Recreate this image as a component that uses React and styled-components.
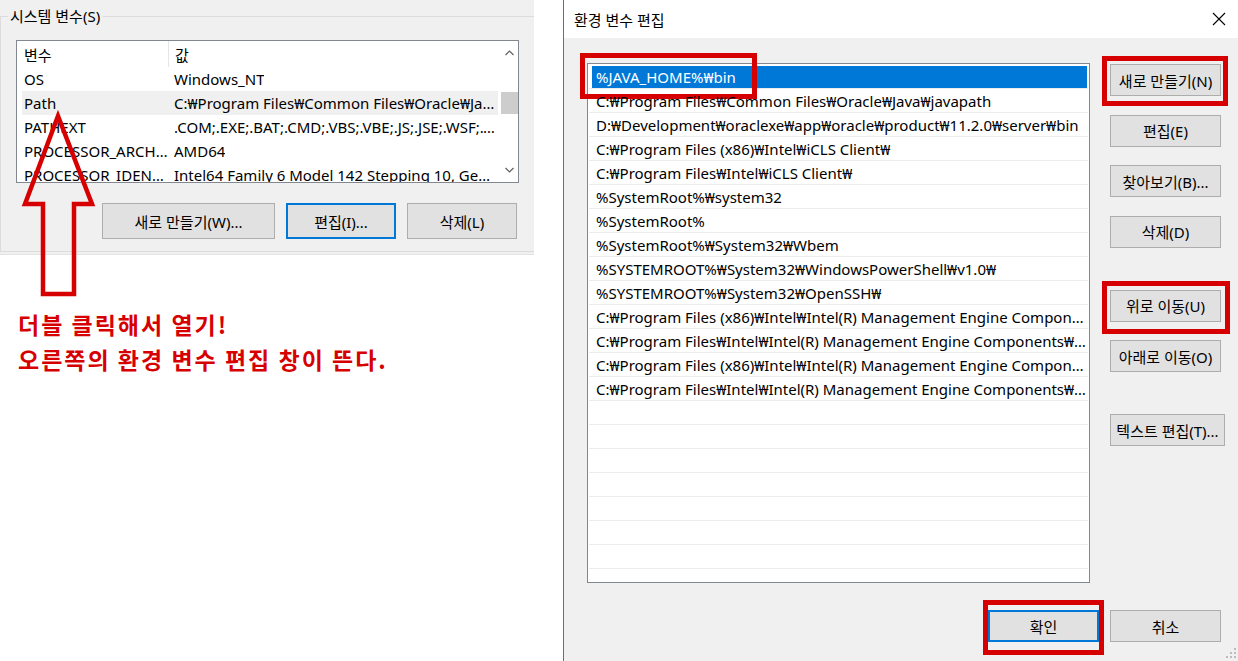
import React from 'react';
import styled, { createGlobalStyle, css } from 'styled-components';

const GlobalStyle = createGlobalStyle`
  html, body {
    margin: 0;
    padding: 0;
    background: #ffffff;
  }
  body {
    font-family: "Noto Sans", "Noto Sans CJK KR", sans-serif;
    font-size: 15px;
    color: #000;
  }
`;

const RED = '#d70000';

const Page = styled.div`
  display: flex;
  width: 1238px;
  height: 661px;
  overflow: hidden;
  background: #fff;
`;

/* ---------- left: 시스템 변수 ---------- */

const LeftSide = styled.div`
  position: relative;
  width: 563px;
  flex-shrink: 0;
  display: flex;
  flex-direction: column;
`;

const SystemPanel = styled.div`
  width: 534px;
  height: 255px;
  background: #f0f0f0;
  box-sizing: border-box;
  padding-top: 6px;
  border-bottom: 1px solid #e3e3e3;
`;

const GroupBox = styled.fieldset`
  margin: 0;
  padding: 0 0 12px 15px;
  border: 1px solid #dcdcdc;
  border-right: none;
  min-width: 0;
`;

const Legend = styled.legend`
  margin-left: -8px;
  padding: 0 3px 0 2px;
  line-height: 20px;
  font-size: 15px;
  color: #000;
`;

const ListView = styled.div`
  margin-top: 14px;
  width: 503px;
  height: 143px;
  box-sizing: border-box;
  border: 1px solid #828790;
  background: #fff;
  display: flex;
  overflow: hidden;
`;

const ListRows = styled.div`
  flex: 1;
  min-width: 0;
  padding: 0 3px 0 5px;
`;

const VarRow = styled.div`
  display: grid;
  grid-template-columns: 146px 1fr;
  height: ${p => (p.$header ? 26 : 24)}px;
  align-items: center;
  background: ${p => (p.$selected ? '#f0f0f0' : 'transparent')};
`;

const Cell = styled.div`
  padding-left: ${p => (p.$value ? 6 : 2)}px;
  white-space: nowrap;
  overflow: hidden;
  height: 100%;
  display: flex;
  align-items: center;
  ${p => p.$divider && css`
    border-left: 1px solid #e5e5e5;
  `}
`;

const CellText = styled.span`
  overflow: hidden;
  text-overflow: ellipsis;
  white-space: nowrap;
`;

const ScrollBar = styled.div`
  width: 17px;
  flex-shrink: 0;
  display: flex;
  flex-direction: column;
  align-items: center;
  background: #fff;
`;

const ScrollArrow = styled.div`
  height: 24px;
  display: flex;
  align-items: center;
  justify-content: center;
`;

const ScrollTrack = styled.div`
  flex: 1;
  width: 100%;
  padding-top: 27px;
  box-sizing: border-box;
`;

const ScrollThumb = styled.div`
  height: 22px;
  background: #cdcdcd;
`;

const ButtonRow = styled.div`
  display: flex;
  justify-content: flex-end;
  gap: 11px;
  margin-top: 20px;
  padding-right: 17px;
`;

const markInsets = {
  side: { top: -9, left: -9, right: -8, bottom: -11 },
  move: { top: -10, left: -9, right: -10, bottom: -13 },
  footer: { top: -12, left: -7, right: -7, bottom: -15 },
};

const WinButton = styled.button`
  position: relative;
  box-sizing: border-box;
  width: ${p => p.$w || 111}px;
  height: ${p => p.$h || 32}px;
  padding: 0;
  background: #e1e1e1;
  border: 1px solid #adadad;
  font-family: inherit;
  font-size: 15px;
  color: #000;
  white-space: nowrap;
  ${p => p.$default && css`
    border: 2px solid #0078d7;
  `}
  ${p => p.$mark && css`
    &::after {
      content: '';
      position: absolute;
      top: ${markInsets[p.$mark].top}px;
      left: ${markInsets[p.$mark].left}px;
      right: ${markInsets[p.$mark].right}px;
      bottom: ${markInsets[p.$mark].bottom}px;
      border: 5px solid ${RED};
      pointer-events: none;
    }
  `}
`;

const ArrowMark = styled.svg`
  position: absolute;
  left: 0;
  top: 0;
  pointer-events: none;
`;

const Note = styled.div`
  margin-top: 52px;
  padding-left: 18px;
  color: ${RED};
  font-family: "Noto Sans CJK KR", sans-serif;
  font-weight: 700;
  font-size: 23px;
  letter-spacing: 2px;
  line-height: 35px;
`;

/* ---------- right: 환경 변수 편집 ---------- */

const Dialog = styled.div`
  flex: 1;
  min-width: 0;
  display: flex;
  flex-direction: column;
  background: #f0f0f0;
  border-left: 1px solid #6f6f6f;
  position: relative;
`;

const TitleBar = styled.div`
  height: 38px;
  flex-shrink: 0;
  background: #fff;
  display: flex;
  align-items: center;
  justify-content: space-between;
  padding: 0 12px 0 10px;
`;

const Title = styled.span`
  font-size: 15px;
`;

const CloseBtn = styled.span`
  display: flex;
  width: 14px;
  height: 14px;
`;

const DialogBody = styled.div`
  display: flex;
  gap: 20px;
  padding: 25px 0 0 23px;
`;

const PathList = styled.div`
  width: 503px;
  height: 520px;
  flex-shrink: 0;
  box-sizing: border-box;
  border: 1px solid #828790;
  background: #fff;
  padding: 1px 1px 0 1px;
`;

const PathRow = styled.div`
  position: relative;
  height: 24px;
  box-sizing: border-box;
  border-bottom: 1px solid #ececec;
  display: flex;
  padding: 1px 1px 0 3px;
`;

const PathText = styled.div`
  flex: 1;
  min-width: 0;
  padding-left: 4px;
  line-height: 22px;
  white-space: nowrap;
  overflow: hidden;
  text-overflow: ellipsis;
  ${p => p.$editing && css`
    background: #0078d7;
    color: #fff;
  `}
`;

const RowMark = styled.span`
  position: absolute;
  top: -12px;
  left: -9px;
  width: 177px;
  height: 46px;
  box-sizing: border-box;
  border: 5px solid ${RED};
  pointer-events: none;
`;

const ButtonColumn = styled.div`
  display: flex;
  flex-direction: column;
  gap: 42px;
  padding-top: 1px;
`;

const ButtonGroup = styled.div`
  display: flex;
  flex-direction: column;
  gap: 18.5px;
`;

const Footer = styled.div`
  display: flex;
  justify-content: flex-end;
  gap: 11px;
  padding: 27px 17px 0 0;
`;

const Grip = styled.svg`
  position: absolute;
  right: 1px;
  bottom: 1px;
`;

const systemVars = [
  ['OS', 'Windows_NT'],
  ['Path', 'C:₩Program Files₩Common Files₩Oracle₩Java₩javapath;C:₩Program Files', true],
  ['PATHEXT', '.COM;.EXE;.BAT;.CMD;.VBS;.VBE;.JS;.JSE;.WSF;.WSH;.MSC'],
  ['PROCESSOR_ARCHITECTURE', 'AMD64'],
  ['PROCESSOR_IDENTIFIER', 'Intel64 Family 6 Model 142 Stepping 10, GenuineIntel'],
];

const paths = [
  '%JAVA_HOME%₩bin',
  'C:₩Program Files₩Common Files₩Oracle₩Java₩javapath',
  'D:₩Development₩oraclexe₩app₩oracle₩product₩11.2.0₩server₩bin',
  'C:₩Program Files (x86)₩Intel₩iCLS Client₩',
  'C:₩Program Files₩Intel₩iCLS Client₩',
  '%SystemRoot%₩system32',
  '%SystemRoot%',
  '%SystemRoot%₩System32₩Wbem',
  '%SYSTEMROOT%₩System32₩WindowsPowerShell₩v1.0₩',
  '%SYSTEMROOT%₩System32₩OpenSSH₩',
  'C:₩Program Files (x86)₩Intel₩Intel(R) Management Engine Components₩DAL',
  'C:₩Program Files₩Intel₩Intel(R) Management Engine Components₩DAL',
  'C:₩Program Files (x86)₩Intel₩Intel(R) Management Engine Components₩IPT',
  'C:₩Program Files₩Intel₩Intel(R) Management Engine Components₩IPT',
];

const Chevron = ({ up }) => (
  <svg width="9" height="6" viewBox="0 0 9 6">
    <path
      d={up ? 'M0.5 5 L4.5 1 L8.5 5' : 'M0.5 1 L4.5 5 L8.5 1'}
      fill="none"
      stroke="#606060"
      strokeWidth="1.2"
    />
  </svg>
);

const App = () => {
  const emptyRows = Array.from({ length: 7 });

  return (
    <>
      <GlobalStyle />
      <Page>
        <LeftSide>
          <SystemPanel>
            <GroupBox>
              <Legend>시스템 변수(S)</Legend>
              <ListView>
                <ListRows>
                  <VarRow $header>
                    <Cell><CellText>변수</CellText></Cell>
                    <Cell $value $divider><CellText>값</CellText></Cell>
                  </VarRow>
                  {systemVars.map(([name, value, selected]) => (
                    <VarRow key={name} $selected={selected}>
                      <Cell><CellText>{name}</CellText></Cell>
                      <Cell $value><CellText>{value}</CellText></Cell>
                    </VarRow>
                  ))}
                </ListRows>
                <ScrollBar>
                  <ScrollArrow><Chevron up /></ScrollArrow>
                  <ScrollTrack><ScrollThumb /></ScrollTrack>
                  <ScrollArrow><Chevron /></ScrollArrow>
                </ScrollBar>
              </ListView>
              <ButtonRow>
                <WinButton $w={173} $h={36}>새로 만들기(W)...</WinButton>
                <WinButton $w={110} $h={36} $default>편집(I)...</WinButton>
                <WinButton $w={110} $h={36}>삭제(L)</WinButton>
              </ButtonRow>
            </GroupBox>
          </SystemPanel>

          <Note>
            더블 클릭해서 열기!
            <br />
            오른쪽의 환경 변수 편집 창이 뜬다.
          </Note>

          <ArrowMark width="120" height="300" viewBox="0 0 120 300">
            <polygon
              points="58,116 92,204 74,204 74,294 43,294 43,204 25,204"
              fill="none"
              stroke={RED}
              strokeWidth="4.5"
              strokeLinejoin="miter"
            />
          </ArrowMark>
        </LeftSide>

        <Dialog>
          <TitleBar>
            <Title>환경 변수 편집</Title>
            <CloseBtn>
              <svg width="14" height="14" viewBox="0 0 14 14">
                <path d="M1 1 L13 13 M13 1 L1 13" stroke="#000" strokeWidth="1.1" />
              </svg>
            </CloseBtn>
          </TitleBar>

          <DialogBody>
            <PathList>
              {paths.map((p, i) => (
                <PathRow key={p}>
                  <PathText $editing={i === 0}>{p}</PathText>
                  {i === 0 && <RowMark />}
                </PathRow>
              ))}
              {emptyRows.map((_, i) => (
                <PathRow key={`empty-${i}`} />
              ))}
            </PathList>

            <ButtonColumn>
              <ButtonGroup>
                <WinButton $mark="side">새로 만들기(N)</WinButton>
                <WinButton>편집(E)</WinButton>
                <WinButton>찾아보기(B)...</WinButton>
                <WinButton>삭제(D)</WinButton>
              </ButtonGroup>
              <ButtonGroup>
                <WinButton $mark="move">위로 이동(U)</WinButton>
                <WinButton>아래로 이동(O)</WinButton>
              </ButtonGroup>
              <ButtonGroup>
                <WinButton $w={115}>텍스트 편집(T)...</WinButton>
              </ButtonGroup>
            </ButtonColumn>
          </DialogBody>

          <Footer>
            <WinButton $default $mark="footer">확인</WinButton>
            <WinButton>취소</WinButton>
          </Footer>

          <Grip width="12" height="12" viewBox="0 0 12 12">
            {[[9, 0], [9, 4], [5, 4], [9, 8], [5, 8], [1, 8]].map(([x, y]) => (
              <rect key={`${x}-${y}`} x={x} y={y} width="2" height="2" fill="#bcbcbc" />
            ))}
          </Grip>
        </Dialog>
      </Page>
    </>
  );
};

export default App;
